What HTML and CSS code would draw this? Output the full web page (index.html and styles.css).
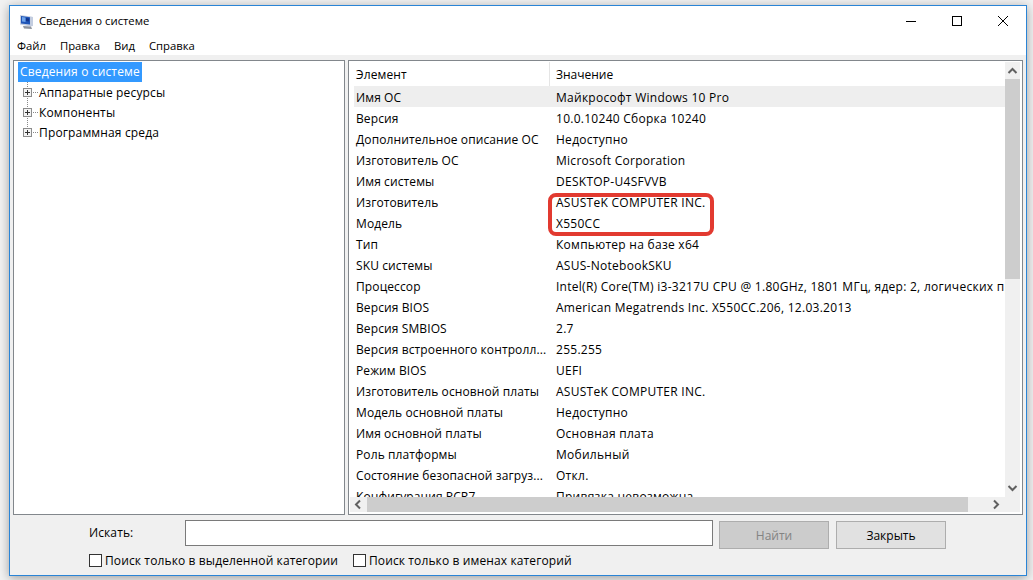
FILE: index.html
```html
<!DOCTYPE html>
<html lang="ru">
<head>
<meta charset="utf-8">
<title>Сведения о системе</title>
<link rel="stylesheet" href="styles.css">
</head>
<body>
<div class="window">
  <div class="titlebar">
    <svg class="app-icon" width="15" height="16" viewBox="0 0 15 16">
      <path d="M1 1l11 1.500 2 .5v9l-2.500 .5L1 10.500z" fill="#c3cde0"/>
      <path d="M2 2l9 1.200v7.300L2 9.500z" fill="#1f55b8"/>
      <path d="M3 3l3.500 .5V8L3 7.500z" fill="#6fa4ea"/>
      <path d="M7 4l3 .4v3L7 7z" fill="#12358c"/>
      <path d="M4 12l8 .5 1 2.500-8-.5z" fill="#8d939d"/>
    </svg>
    <span class="title">Сведения о системе</span>
    <div class="controls">
      <svg class="ctl" width="46" height="30" viewBox="0 0 46 30"><path d="M18 15.500h10" stroke="#000" fill="none"/></svg>
      <svg class="ctl" width="46" height="30" viewBox="0 0 46 30"><rect x="18.500" y="10.500" width="9" height="9" stroke="#000" fill="none"/></svg>
      <svg class="ctl" width="46" height="30" viewBox="0 0 46 30"><path d="M18 10l10 10M28 10L18 20" stroke="#000" fill="none"/></svg>
    </div>
  </div>
  <div class="menubar">
    <span>Файл</span><span>Правка</span><span>Вид</span><span>Справка</span>
  </div>
  <div class="panes">
    <div class="tree">
      <div class="node root"><span class="selected">Сведения о системе</span></div>
      <div class="node"><span class="expander"></span><span class="dots"></span>Аппаратные ресурсы</div>
      <div class="node"><span class="expander"></span><span class="dots"></span>Компоненты</div>
      <div class="node"><span class="expander"></span><span class="dots"></span>Программная среда</div>
    </div>
    <div class="details">
      <div class="list-area">
        <div class="list">
          <div class="row head"><span class="k">Элемент</span><span class="v">Значение</span></div>
          <div class="row first"><span class="k">Имя ОС</span><span class="v">Майкрософт Windows 10 Pro</span></div>
          <div class="row"><span class="k">Версия</span><span class="v">10.0.10240 Сборка 10240</span></div>
          <div class="row"><span class="k">Дополнительное описание ОС</span><span class="v">Недоступно</span></div>
          <div class="row"><span class="k">Изготовитель ОС</span><span class="v">Microsoft Corporation</span></div>
          <div class="row"><span class="k">Имя системы</span><span class="v">DESKTOP-U4SFVVB</span></div>
          <div class="row"><span class="k">Изготовитель</span><span class="v">ASUSTeK COMPUTER INC.</span></div>
          <div class="row"><span class="k">Модель</span><span class="v">X550CC</span></div>
          <div class="row"><span class="k">Тип</span><span class="v">Компьютер на базе x64</span></div>
          <div class="row"><span class="k">SKU системы</span><span class="v">ASUS-NotebookSKU</span></div>
          <div class="row"><span class="k">Процессор</span><span class="v">Intel(R) Core(TM) i3-3217U CPU @ 1.80GHz, 1801 МГц, ядер: 2, логических процессоров: 4</span></div>
          <div class="row"><span class="k">Версия BIOS</span><span class="v">American Megatrends Inc. X550CC.206, 12.03.2013</span></div>
          <div class="row"><span class="k">Версия SMBIOS</span><span class="v">2.7</span></div>
          <div class="row"><span class="k">Версия встроенного контролл...</span><span class="v">255.255</span></div>
          <div class="row"><span class="k">Режим BIOS</span><span class="v">UEFI</span></div>
          <div class="row"><span class="k">Изготовитель основной платы</span><span class="v">ASUSTeK COMPUTER INC.</span></div>
          <div class="row"><span class="k">Модель основной платы</span><span class="v">Недоступно</span></div>
          <div class="row"><span class="k">Имя основной платы</span><span class="v">Основная плата</span></div>
          <div class="row"><span class="k">Роль платформы</span><span class="v">Мобильный</span></div>
          <div class="row"><span class="k">Состояние безопасной загруз...</span><span class="v">Откл.</span></div>
          <div class="row"><span class="k">Конфигурация PCR7</span><span class="v">Привязка невозможна</span></div>
        </div>
        <div class="vscroll">
          <svg width="15" height="17" viewBox="0 0 15 17"><path d="M3.500 11l4-4 4 4" stroke="#606060" stroke-width="2" fill="none"/></svg>
          <div class="vthumb"></div>
          <svg class="vdown" width="15" height="17" viewBox="0 0 15 17"><path d="M3.500 6l4 4 4-4" stroke="#606060" stroke-width="2" fill="none"/></svg>
        </div>
      </div>
      <div class="hscroll">
        <svg width="17" height="15" viewBox="0 0 17 15"><path d="M10 3.500l-4 4 4 4" stroke="#606060" stroke-width="2" fill="none"/></svg>
        <div class="hthumb"></div>
        <svg class="hright" width="17" height="15" viewBox="0 0 17 15"><path d="M6 3.500l4 4-4 4" stroke="#606060" stroke-width="2" fill="none"/></svg>
      </div>
      <div class="highlight"></div>
    </div>
  </div>
  <div class="searchbar">
    <label class="search-label">Искать:</label>
    <div class="search-input"></div>
    <div class="btn disabled">Найти</div>
    <div class="btn close">Закрыть</div>
  </div>
  <div class="checks">
    <span class="check"><span class="box"></span>Поиск только в выделенной категории</span>
    <span class="check"><span class="box"></span>Поиск только в именах категорий</span>
  </div>
</div>
</body>
</html>
```
FILE: styles.css
```css
* { box-sizing: border-box; }
html, body { margin: 0; height: 100%; }
body {
  width: 1033px;
  height: 580px;
  overflow: hidden;
  background: #f2f2f2;
  padding: 5px 6px 4px 9px;
  font-family: "Open Sans", "Noto Sans", sans-serif;
  font-size: 12px;
  color: #000;
}
.window {
  width: 1018px;
  height: 571px;
  border: 1px solid #2a84d6;
  background: #f0f0f0;
  box-shadow: 0 2px 10px rgba(0,0,0,.35);
  display: flex;
  flex-direction: column;
}
.titlebar {
  height: 29px;
  background: #fff;
  display: flex;
  align-items: center;
  padding-left: 9px;
  flex: none;
}
.app-icon { flex: none; margin-top: 3px; }
.title { margin-left: 5px; font-size: 11.300px; }
.controls { margin-left: auto; display: flex; align-self: flex-start; }
.menubar {
  height: 20px;
  background: #fff;
  flex: none;
  display: flex;
  gap: 14px;
  padding-left: 7px;
  align-items: center;
  font-size: 11.300px;
}
.panes {
  flex: none;
  height: 455px;
  margin: 5px 3px 0 3px;
  display: flex;
  gap: 3px;
}
.tree {
  width: 332px;
  flex: none;
  background: #fff;
  border: 1px solid #82878c;
  padding: 1px 0 0 4px;
  letter-spacing: .15px;
  position: relative;
}
.tree::before {
  content: "";
  position: absolute;
  left: 13px;
  top: 21px;
  height: 47px;
  border-left: 1px dotted #888;
}
.node {
  height: 20px;
  display: flex;
  align-items: center;
  white-space: nowrap;
  position: relative;
  padding-left: 5px;
}
.root { padding-left: 0; }
.selected { background: #3399ff; color: #fff; padding: 0 2px; height: 20px; line-height: 20px; }
.expander {
  width: 9px;
  height: 9px;
  border: 1px solid #8c8c8c;
  background:
    linear-gradient(#333, #333) center / 5px 1px no-repeat,
    linear-gradient(#333, #333) center / 1px 5px no-repeat,
    #f4f4f4;
  flex: none;
  position: relative;
  z-index: 1;
}
.dots { width: 5px; border-top: 1px dotted #888; margin: 0 1px; flex: none; }
.details {
  flex: 1;
  min-width: 0;
  border: 1px solid #82878c;
  background: #fff;
  padding: 1px 2px 2px 1px;
  display: flex;
  flex-direction: column;
  position: relative;
}
.list-area { flex: 1; min-height: 0; display: flex; }
.list { flex: 1; min-width: 0; overflow: hidden; padding-left: 4px; }
.row {
  display: flex;
  height: 21px;
  align-items: center;
  white-space: nowrap;
  padding-top: 1px;
}
.row.head { height: 24px; padding-top: 0; }
.row.first { background: #eeeeee; }
.k { width: 196px; flex: none; padding-left: 2px; letter-spacing: .11px; }
.v { padding-left: 6px; flex: none; letter-spacing: .27px; }
.head .v { letter-spacing: 0; }
.head .k { border-right: 1px solid #e5e5e5; height: 100%; display: flex; align-items: center; }
.vscroll { width: 15px; flex: none; background: #f0f0f0; display: flex; flex-direction: column; }
.vscroll svg, .hscroll svg { flex: none; display: block; }
.vthumb { height: 200px; background: #cdcdcd; }
.vdown { margin-top: auto; }
.hscroll { height: 15px; flex: none; background: #f0f0f0; display: flex; }
.hthumb { width: 601px; background: #cdcdcd; }
.hright { margin-left: auto; margin-right: 15px; }
.highlight {
  position: absolute;
  left: 199px;
  top: 132px;
  width: 166px;
  height: 43px;
  border: 4px solid #e23a30;
  border-radius: 8px;
}
.searchbar {
  flex: none;
  display: flex;
  align-items: flex-start;
  height: 29px;
  margin-top: 5px;
  padding-left: 79px;
}
.search-label { width: 96px; line-height: 26px; letter-spacing: .1px; }
.search-input { width: 528px; height: 26px; background: #fff; border: 1px solid #7a7a7a; }
.btn {
  width: 110px;
  height: 28px;
  margin-top: 1px;
  margin-left: 6px;
  border: 1px solid #adadad;
  background: #e1e1e1;
  display: flex;
  align-items: center;
  justify-content: center;
}
.btn.close { margin-left: 7px; }
.btn.disabled { background: #cccccc; color: #838383; }
.checks {
  flex: none;
  display: flex;
  gap: 15px;
  padding-left: 79px;
  margin-top: 1px;
  letter-spacing: .12px;
}
.check { display: flex; align-items: center; height: 20px; }
.box { width: 13px; height: 13px; border: 1px solid #333; background: #fff; margin-right: 3px; flex: none; }
```
